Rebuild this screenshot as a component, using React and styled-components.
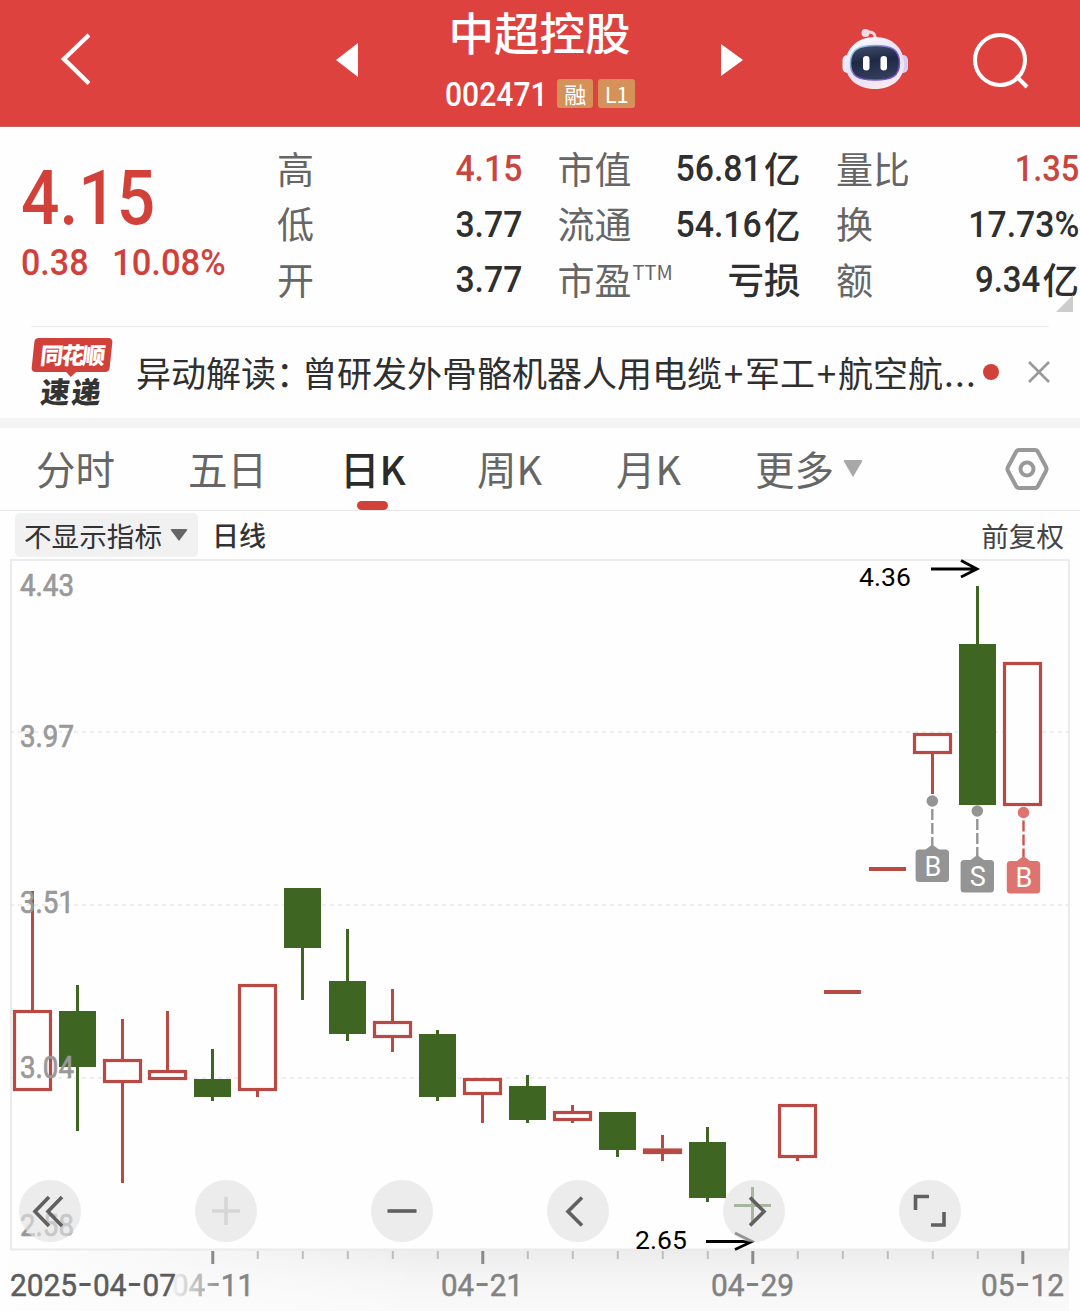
import React from "react";
import styled, { createGlobalStyle } from "styled-components";

const CJK = `"Noto Sans CJK SC", sans-serif`;
const DIGITS = `Roboto, "Noto Sans CJK SC", sans-serif`;
const RED = "#d1413a";
const UP = "#b94a43";
const DOWN = "#3e6622";

const GlobalStyle = createGlobalStyle`
  * { box-sizing: border-box; }
  body { margin: 0; background: #fff; font-family: ${CJK}; }
`;

const Page = styled.div`
  width: 1080px;
  height: 1311px;
  overflow: hidden;
  display: flex;
  flex-direction: column;
  background: #fefefe;
  color: #333;
  white-space: nowrap;
`;

/* Condensed numerals; $gap pulls the following item over the freed space. */
const Num = styled.span`
  display: inline-block;
  font-family: ${DIGITS};
  font-size: ${(p) => p.$size || 37.5}px;
  font-weight: 500;
  line-height: 1;
  transform: scaleX(${(p) => p.$k || 0.9});
  transform-origin: ${(p) => p.$origin || "right"} center;
  margin-right: ${(p) => p.$gap || 0}px;
`;

/* ---------- header ---------- */
const Header = styled.header`
  flex: none;
  height: 127px;
  padding-left: 60px;
  display: flex;
  align-items: center;
  background: #de423f;
  border-bottom: 1px solid #c9605c;
  color: #fff;
  svg { display: block; flex: none; }
`;
const Slot = styled.div`
  flex: none;
  margin-left: ${(p) => p.$left || 0}px;
  margin-top: ${(p) => p.$top || 0}px;
`;
const TitleBlock = styled.div`
  width: 363px;
  height: 127px;
  padding-top: 4px;
  display: flex;
  flex-direction: column;
  align-items: center;
`;
const Title = styled.h1`
  margin: 0;
  font-size: 45.5px;
  line-height: 54px;
  font-weight: 500;
`;
const CodeRow = styled.div`
  width: 189px;
  height: 34px;
  margin-top: 19px;
  display: flex;
  align-items: center;
`;
const Badge = styled.span`
  flex: none;
  width: 36.5px;
  height: 29px;
  margin-right: 5px;
  border-radius: 3px;
  background: #d5915a;
  font-size: 22px;
  line-height: 29px;
  text-align: center;
`;

/* ---------- quote ---------- */
const Quote = styled.section`
  flex: none;
  height: 199px;
  display: flex;
  position: relative;
`;
const PriceBlock = styled.div`
  width: 277px;
  padding: 33px 0 0 21px;
  color: ${RED};
`;
const Price = styled.div`
  height: 84px;
  line-height: 84px;
`;
const Change = styled.div`
  display: flex;
`;
const Stats = styled.div`
  width: 802px;
  height: 167px;
  margin-top: 14px;
  display: grid;
  grid-template-columns: 245px 243px 243px;
  grid-template-rows: repeat(3, 55.5px);
  column-gap: 35.5px;
`;
const Stat = styled.div`
  display: flex;
  align-items: center;
  justify-content: space-between;
  font-size: 37px;
  line-height: 51px;
`;
const Label = styled.span`
  color: #666;
  font-weight: 400;
  margin-bottom: 1px;
  sup { font: 400 20px/1 ${CJK}; vertical-align: 15px; margin-left: 1px; }
`;
const Value = styled.span`
  display: flex;
  align-items: center;
  font-weight: 500;
  color: ${(p) => (p.$red ? "#c9453e" : "#2f2f2f")};
`;
const Unit = styled.span`
  font-size: 36.5px;
  margin-bottom: 2px;
`;
const Corner = styled.i`
  position: absolute;
  right: 7px;
  bottom: 14px;
  border-style: solid;
  border-width: 0 0 17px 17px;
  border-color: transparent transparent #ccc transparent;
`;

/* ---------- news ---------- */
const News = styled.section`
  flex: none;
  height: 92px;
  margin: 0 31px;
  padding-bottom: 2px;
  border-top: 1px solid #ededed;
  display: flex;
  align-items: center;
`;
const Brand = styled.div`
  flex: none;
  width: 82px;
  height: 68px;
  display: flex;
  flex-direction: column;
  align-items: center;
`;
const BrandTop = styled.div`
  position: relative;
  width: 78px;
  height: 34px;
  border-radius: 4px;
  background: ${RED};
  color: #fff;
  transform: skewX(-6deg);
  font-size: 23px;
  font-weight: 900;
  line-height: 32px;
  letter-spacing: -2px;
  text-align: center;
  &::after {
    content: "";
    position: absolute;
    left: 34px;
    top: 33px;
    border: solid transparent;
    border-width: 6px 6px 0;
    border-top-color: ${RED};
  }
`;
const BrandBottom = styled.div`
  margin-top: 2px;
  font-size: 29px;
  font-weight: 900;
  line-height: 32px;
  letter-spacing: 2px;
  transform: skewX(-6deg);
`;
const Headline = styled.div`
  flex: none;
  width: 847px;
  margin-left: 23px;
  font-size: 35px;
  line-height: 50px;
  color: #2f2f2f;
  display: flex;
`;
const Colon = styled.span`
  letter-spacing: -9px;
`;
const Plus = styled.span`
  width: 23px;
  text-align: center;
`;
const Dots = styled.span`
  margin-left: 1px;
  letter-spacing: 1.2px;
`;
const Dot = styled.i`
  flex: none;
  width: 16px;
  height: 16px;
  margin-right: 28px;
  border-radius: 50%;
  background: ${RED};
`;
const Close = styled.svg`
  flex: none;
`;

/* ---------- tabs ---------- */
const Tabs = styled.nav`
  flex: none;
  height: 93px;
  border-top: 10px solid #f4f4f4;
  border-bottom: 1px solid #e9e9e9;
  padding-left: 36px;
  display: grid;
  grid-template-columns: 152px 152px 137px 139px 139px 250px 44px;
  align-items: center;
`;
const Tab = styled.div`
  height: 82px;
  display: flex;
  align-items: center;
  justify-self: start;
  position: relative;
  padding-bottom: 2px;
  font-size: 39.5px;
  line-height: 78px;
  font-weight: ${(p) => (p.$active ? 500 : 400)};
  color: ${(p) => (p.$active ? "#2b2b2b" : "#666")};
  &::after {
    content: "";
    display: ${(p) => (p.$active ? "block" : "none")};
    position: absolute;
    bottom: 0;
    left: 17px;
    width: 31px;
    height: 9px;
    border-radius: 5px;
    background: ${RED};
  }
`;
const Caret = styled.i`
  border: solid transparent;
  border-width: ${(p) => p.$h}px ${(p) => p.$w / 2}px 0;
  border-top-color: ${(p) => p.$color};
  border-radius: 2px;
  margin-left: ${(p) => p.$left}px;
`;

/* ---------- indicator bar ---------- */
const IndicatorBar = styled.div`
  flex: none;
  height: 48px;
  padding: 0 16px 0 15px;
  display: flex;
  align-items: center;
  font-size: 27.6px;
  line-height: 42px;
`;
const Picker = styled.div`
  width: 183px;
  height: 44px;
  padding-left: 9px;
  margin-right: 14px;
  border-radius: 5px;
  background: #f1f1f1;
  display: flex;
  align-items: center;
`;
const Period = styled.span`
  font-size: 27px;
  font-weight: 500;
`;
const Adjust = styled.span`
  margin-left: auto;
  color: #444;
`;

/* ---------- chart ---------- */
const ChartArea = styled.div`
  flex: none;
  height: 752px;
  position: relative;
`;
const ChartSvg = styled.svg`
  display: block;
  text { font-family: ${DIGITS}; }
`;
const Controls = styled.div`
  position: absolute;
  left: 19px;
  top: 621px;
  display: flex;
  gap: 114px;
`;
const RoundButton = styled.button`
  width: 62px;
  height: 62px;
  padding: 0;
  border: 0;
  border-radius: 50%;
  background: rgba(226, 226, 226, 0.65);
  svg {
    display: block;
    fill: none;
    stroke: ${(p) => (p.$dim ? "#d6d6d6" : "#606060")};
    stroke-width: 3.6;
  }
`;

// [direction, high, body top, body bottom, low] per trading day, in plot pixels
const CANDLES = [
  ["up", 891, 1010, 1091, 1091],
  ["down", 985, 1011, 1067, 1131],
  ["up", 1019, 1059, 1083, 1183],
  ["up", 1011, 1070, 1080, 1080],
  ["down", 1049, 1079, 1097, 1101],
  ["up", 984, 984, 1091, 1097],
  ["down", 888, 888, 948, 1000],
  ["down", 929, 981, 1034, 1041],
  ["up", 989, 1021, 1038, 1052],
  ["down", 1030, 1034, 1097, 1101],
  ["up", 1078, 1078, 1095, 1123],
  ["down", 1075, 1086, 1120, 1123],
  ["up", 1105, 1111, 1121, 1123],
  ["down", 1112, 1112, 1150, 1157],
  ["up", 1135, 1148.5, 1154, 1161],
  ["down", 1127, 1142, 1198, 1202],
  ["down", 1187, 1204, 1207, 1222],
  ["up", 1104, 1104, 1158, 1161],
  ["up", 990, 990, 994, 994],
  ["up", 867, 867, 871, 871],
  ["up", 733, 733, 754, 794],
  ["down", 586, 644, 805, 805],
  ["up", 662, 662, 806, 806],
];

const PRICES = [
  ["4.43", 595.5],
  ["3.97", 746.5],
  ["3.51", 912.5],
  ["3.04", 1078],
  ["2.58", 1235.5],
];

function Candle({ index, data }) {
  const [dir, high, top, bottom, low] = data;
  const x = 32.5 + index * 45;
  const color = dir === "up" ? UP : DOWN;
  const hollow = dir === "up" && bottom - top > 5;
  return (
    <g>
      {high < top && <rect x={x - 1.5} y={high} width="3" height={top - high} fill={color} />}
      {low > bottom && <rect x={x - 1.5} y={bottom} width="3" height={low - bottom} fill={color} />}
      {hollow ? (
        <rect x={x - 18} y={top + 1.5} width="36" height={bottom - top - 3} fill="#fefefe" stroke={color} strokeWidth="3.2" />
      ) : (
        <rect x={x - 18.5} y={top} width="37" height={bottom - top} fill={color} />
      )}
    </g>
  );
}

function Marker({ x, y, end, letter, color, line }) {
  return (
    <g>
      <circle cx={x} cy={y} r="5.8" fill={color} />
      <path d={`M${x} ${y + 8}V${end - 4}`} stroke={line || color} strokeWidth="2.4" strokeDasharray="11 3" />
      <path d={`M${x - 8} ${end + 1}L${x} ${end - 5}L${x + 8} ${end + 1}Z`} fill={color} />
      <rect x={x - 16.7} y={end} width="33.4" height="32.5" rx="3.5" fill={color} />
      <text x={x + 0.5} y={end + 26} fontSize="27" textAnchor="middle" fill="#fff">{letter}</text>
    </g>
  );
}

function DateLabel({ x, width, parts, fill }) {
  return (
    <text x={x} y="1296" fontSize="31" fill={fill} stroke={fill} strokeWidth="0.5" textLength={width} lengthAdjust="spacingAndGlyphs">
      {parts.map((part, i) => (
        <React.Fragment key={i}>
          {i > 0 && <tspan fontFamily="Inter" fontSize="36" strokeWidth="0">-</tspan>}
          {part}
        </React.Fragment>
      ))}
    </text>
  );
}

function Chart() {
  return (
    <ChartSvg width="1080" height="752" viewBox="0 559 1080 752">
      <defs>
        <linearGradient id="axisShade" x1="0" y1="0" x2="0" y2="1">
          <stop offset="0" stopColor="#ececec" />
          <stop offset="0.45" stopColor="#f5f5f5" />
          <stop offset="1" stopColor="#fafafa" />
        </linearGradient>
        <linearGradient id="axisFade" x1="0" y1="0" x2="1" y2="0">
          <stop offset="0" stopColor="#fefefe" />
          <stop offset="0.35" stopColor="#fbfbfb" stopOpacity="0.8" />
          <stop offset="1" stopColor="#fefefe" stopOpacity="0" />
        </linearGradient>
        <linearGradient id="dateFade" gradientUnits="userSpaceOnUse" x1="172" y1="0" x2="226" y2="0">
          <stop offset="0" stopColor="#f2f2f2" />
          <stop offset="1" stopColor="#858585" />
        </linearGradient>
      </defs>
      <rect x="0" y="1250" width="1069" height="61" fill="url(#axisShade)" />
      <rect x="0" y="1250" width="420" height="61" fill="url(#axisFade)" />
      <rect x="11" y="560" width="1058" height="689.5" fill="none" stroke="#ebebeb" strokeWidth="2" />
      {[732, 905, 1078].map((y) => (
        <path key={y} d={`M10 ${y}H1069`} stroke="#e9e9e9" strokeWidth="1.6" strokeDasharray="4 4" />
      ))}
      {CANDLES.map((c, i) => <Candle key={i} index={i} data={c} />)}
      {PRICES.map(([label, y]) => (
        <text key={label} x="20" y={y} fontSize="30.5" fill="#999" stroke="#999" strokeWidth="0.7" textLength="54" lengthAdjust="spacingAndGlyphs">{label}</text>
      ))}
      <text x="859" y="586" fontSize="26.5" fill="#000" textLength="52">4.36</text>
      <text x="635" y="1249" fontSize="26.5" fill="#000" textLength="52">2.65</text>
      <path d="M931 569H976M961 560.5L977 569L961 577" fill="none" stroke="#000" strokeWidth="2.8" />
      <path d="M706 1241.500H751M735 1233L752 1241.500L735 1249.500" fill="none" stroke="#000" strokeWidth="2.8" />
      <Marker x={932.3} y={801} end={849.5} letter="B" color="#949494" />
      <Marker x={977.3} y={811} end={860} letter="S" color="#949494" />
      <Marker x={1023.5} y={812.5} end={861} letter="B" color="#de7470" line="#c85550" />
      {Array.from({ length: 19 }, (_, i) => {
        const major = i % 6 === 0;
        const w = major ? 3 : 2;
        return <rect key={i} x={212.8 + i * 45 - w / 2} y="1251" width={w} height={major ? 13 : 8} fill={major ? "#8a8a8a" : "#bebebe"} />;
      })}
      <DateLabel x={10} width={166} parts={["2025", "04", "07"]} fill="#5c5c5c" />
      <DateLabel x={172} width={82} parts={["04", "11"]} fill="url(#dateFade)" />
      <DateLabel x={441} width={82} parts={["04", "21"]} fill="#828282" />
      <DateLabel x={711} width={83} parts={["04", "29"]} fill="#828282" />
      <DateLabel x={981} width={83} parts={["05", "12"]} fill="#828282" />
    </ChartSvg>
  );
}

const BUTTONS = [
  { id: "first", d: "M30 17L16 31.500L30 46M43 17L29 31.500L43 46" },
  { id: "zoom-in", d: "M17 31H45M31 17V45", dim: true },
  { id: "zoom-out", d: "M16.500 31H45.500" },
  { id: "prev", d: "M35 17.500L21 31.500L35 45.500" },
  { id: "next", d: "M27 17.500L41 31.500L27 45.500" },
  { id: "expand", d: "M16.500 30V16.500H30M45 32V45H32" },
];

function Robot() {
  return (
    <svg width="66" height="62" viewBox="0 0 66 62">
      <defs>
        <linearGradient id="shell" x1="0" y1="0" x2="0.5" y2="1">
          <stop offset="0" stopColor="#fff" />
          <stop offset="0.6" stopColor="#e6e0f6" />
          <stop offset="1" stopColor="#f6e9ef" />
        </linearGradient>
        <linearGradient id="visor" x1="0" y1="0" x2="0.2" y2="1">
          <stop offset="0" stopColor="#44506f" />
          <stop offset="0.5" stopColor="#1f2946" />
          <stop offset="1" stopColor="#333c5a" />
        </linearGradient>
        <linearGradient id="rim" x1="0" y1="0" x2="1" y2="1">
          <stop offset="0" stopColor="#a9e6ee" />
          <stop offset="0.5" stopColor="#7060c0" />
          <stop offset="1" stopColor="#7a4fd0" />
        </linearGradient>
      </defs>
      <path d="M23 4.500C30 3 33.500 5 33.500 12" fill="none" stroke="#f3d4df" strokeWidth="3" />
      <circle cx="23.500" cy="5" r="4" fill="#f7dbe4" />
      <rect x="0.500" y="27" width="12" height="18" rx="5" fill="#f5f0fb" />
      <rect x="54" y="27" width="12" height="18" rx="5" fill="#d9cdf2" />
      <path d="M33 9C51 9 62 21 62 36C62 51 50 61 33 61C16 61 3.500 51 3.500 36C3.500 21 15 9 33 9Z" fill="url(#shell)" />
      <path d="M33 17.500C50 17.500 57.500 22 57.500 35C57.500 48 50 52 33 52C16 52 8.500 48 8.500 35C8.500 22 16 17.500 33 17.500Z" fill="url(#visor)" stroke="url(#rim)" strokeWidth="1.500" />
      <rect x="21" y="28" width="6.500" height="14.500" rx="3.200" fill="#fff" />
      <rect x="38.500" y="28" width="6.500" height="14.500" rx="3.200" fill="#fff" />
    </svg>
  );
}

export default function App() {
  return (
    <Page>
      <GlobalStyle />
      <Header>
        <Slot $top={-8}>
          <svg width="30" height="54" viewBox="0 0 30 54" fill="none" stroke="#fff" strokeWidth="4.4">
            <path d="M29 3L4 27L29 51.500" />
          </svg>
        </Slot>
        <Slot $left={246} $top={-6}>
          <svg width="22" height="34"><path d="M22 0V34L0 17Z" fill="#fff" /></svg>
        </Slot>
        <TitleBlock>
          <Title>中超控股</Title>
          <CodeRow>
            <Num $size={34} $k={0.885} $origin="left" $gap={-4}>002471</Num>
            <Badge>融</Badge>
            <Badge>L1</Badge>
          </CodeRow>
        </TitleBlock>
        <Slot $top={-6}>
          <svg width="22" height="34"><path d="M0 1V33L22 17Z" fill="#fff" /></svg>
        </Slot>
        <Slot $left={99} $top={-9}><Robot /></Slot>
        <Slot $left={65} $top={-5}>
          <svg width="56" height="58" viewBox="0 0 56 58" fill="none" stroke="#fff" strokeWidth="4">
            <circle cx="27" cy="28" r="25" />
            <path d="M43 44L54 55" />
          </svg>
        </Slot>
      </Header>

      <Quote>
        <PriceBlock>
          <Price><Num $size={76} $k={0.89} $origin="left">4.15</Num></Price>
          <Change>
            <Num $size={37} $k={0.92} $origin="left" $gap={18}>0.38</Num>
            <Num $size={37} $k={0.935} $origin="left">10.08%</Num>
          </Change>
        </PriceBlock>
        <Stats>
          <Stat><Label>高</Label><Value $red><Num>4.15</Num></Value></Stat>
          <Stat><Label>市值</Label><Value><Num $gap={2}>56.81</Num><Unit>亿</Unit></Value></Stat>
          <Stat><Label>量比</Label><Value $red><Num $k={0.87}>1.35</Num></Value></Stat>
          <Stat><Label>低</Label><Value><Num>3.77</Num></Value></Stat>
          <Stat><Label>流通</Label><Value><Num $gap={2}>54.16</Num><Unit>亿</Unit></Value></Stat>
          <Stat><Label>换</Label><Value><Num>17.73%</Num></Value></Stat>
          <Stat><Label>开</Label><Value><Num>3.77</Num></Value></Stat>
          <Stat><Label>市盈<sup>TTM</sup></Label><Value><Unit>亏损</Unit></Value></Stat>
          <Stat><Label>额</Label><Value><Num $k={0.88} $gap={2}>9.34</Num><Unit>亿</Unit></Value></Stat>
        </Stats>
        <Corner />
      </Quote>

      <News>
        <Brand>
          <BrandTop>同花顺</BrandTop>
          <BrandBottom>速递</BrandBottom>
        </Brand>
        <Headline>
          异动解读<Colon>：</Colon>曾研发外骨骼机器人用电缆<Plus>+</Plus>军工<Plus>+</Plus>航空航<Dots>...</Dots>
        </Headline>
        <Dot />
        <Close width="24" height="24" viewBox="0 0 24 24" fill="none" stroke="#999" strokeWidth="2.6">
          <path d="M2 2L22 22M22 2L2 22" />
        </Close>
      </News>

      <Tabs>
        <Tab>分时</Tab>
        <Tab>五日</Tab>
        <Tab $active>日K</Tab>
        <Tab>周K</Tab>
        <Tab>月K</Tab>
        <Tab>更多<Caret $w={20} $h={17} $left={9} $color="#a8a8a8" /></Tab>
        <svg width="44" height="44" viewBox="0 0 44 44" fill="none" stroke="#999" strokeWidth="4" strokeLinejoin="round">
          <path d="M14 3H30Q32 3 33 5L41 20Q42 22 41 24L33 39Q32 41 30 41H14Q12 41 11 39L3 24Q2 22 3 20L11 5Q12 3 14 3Z" />
          <circle cx="22" cy="22" r="6.500" />
        </svg>
      </Tabs>

      <IndicatorBar>
        <Picker>不显示指标<Caret $w={18} $h={12} $left={8} $color="#666" /></Picker>
        <Period>日线</Period>
        <Adjust>前复权</Adjust>
      </IndicatorBar>

      <ChartArea>
        <Chart />
        <Controls>
          {BUTTONS.map((b) => (
            <RoundButton key={b.id} $dim={b.dim}>
              <svg width="62" height="62"><path d={b.d} /></svg>
            </RoundButton>
          ))}
        </Controls>
      </ChartArea>
    </Page>
  );
}
